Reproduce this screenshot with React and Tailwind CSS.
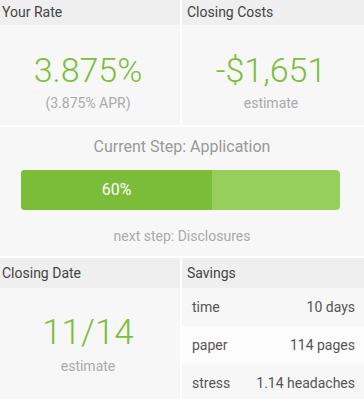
export default function App() {
  const rows = [
    { label: "time", value: "10 days", bg: "bg-[#f7f7f7]" },
    { label: "paper", value: "114 pages", bg: "bg-[#fcfcfc]" },
    { label: "stress", value: "1.14 headaches", bg: "bg-[#f7f7f7]" },
  ]
  const pct = 60

  return (
    <div className="w-[364px] h-[399px] overflow-hidden bg-white" style={{ fontFamily: "Roboto, 'Liberation Sans', sans-serif" }}>
      {/* Top: rate + costs */}
      <div className="flex gap-[2px]">
        <div className="w-[180px] bg-[#f7f7f7]">
          <div className="h-[25px] bg-[#efefef] pl-[2px] flex items-center text-[14px] text-[#444]">Your Rate</div>
          <div className="h-[100px] flex flex-col items-center pt-[25px] pr-[4px]">
            <div className="text-[34px] leading-[40px] font-light text-[#7bbf3a]">3.875%</div>
            <div className="mt-[3px] text-[14px] leading-[20px] text-[#aaa]">(3.875% APR)</div>
          </div>
        </div>
        <div className="flex-1 bg-[#f7f7f7]">
          <div className="h-[25px] bg-[#efefef] pl-[5px] flex items-center text-[14px] text-[#444]">Closing Costs</div>
          <div className="h-[100px] flex flex-col items-center pt-[25px] pr-[4px]">
            <div className="text-[34px] leading-[40px] font-light text-[#7bbf3a]">-$1,651</div>
            <div className="mt-[3px] text-[14px] leading-[20px] text-[#aaa]">estimate</div>
          </div>
        </div>
      </div>

      {/* Progress */}
      <div className="mt-[2px] h-[129px] bg-[#f7f7f7] flex flex-col items-center pt-[8px]">
        <div className="text-[16px] leading-[24px] text-[#999]">Current Step: Application</div>
        <div className="mt-[11px] self-stretch ml-[21px] mr-[24px] h-[40px] rounded-[4px] overflow-hidden flex bg-[#97cf5d]">
          <div className="h-full bg-[#7bbd38] flex items-center justify-center text-white text-[16px]" style={{ width: `${pct}%` }}>
            {pct}%
          </div>
        </div>
        <div className="mt-[16px] text-[14px] leading-[20px] text-[#aaa]">next step: Disclosures</div>
      </div>

      {/* Bottom: date + savings */}
      <div className="mt-[2px] flex gap-[2px]">
        <div className="w-[180px] h-[141px] bg-[#f7f7f7]">
          <div className="h-[30px] bg-[#efefef] pl-[2px] flex items-center text-[14px] text-[#444]">Closing Date</div>
          <div className="flex flex-col items-center pt-[25px] pr-[4px]">
            <div className="text-[35px] leading-[40px] font-light text-[#7bbf3a]">11/14</div>
            <div className="mt-[3px] text-[14px] leading-[20px] text-[#aaa]">estimate</div>
          </div>
        </div>
        <div className="flex-1 h-[141px] bg-[#f7f7f7]">
          <div className="h-[30px] bg-[#efefef] pl-[5px] flex items-center text-[14px] text-[#444]">Savings</div>
          {rows.map(r => (
            <div key={r.label} className={`h-[38px] flex items-center justify-between pl-[10px] pr-[9px] text-[14px] text-[#555] ${r.bg}`}>
              <span>{r.label}</span>
              <span>{r.value}</span>
            </div>
          ))}
        </div>
      </div>
    </div>
  )
}
